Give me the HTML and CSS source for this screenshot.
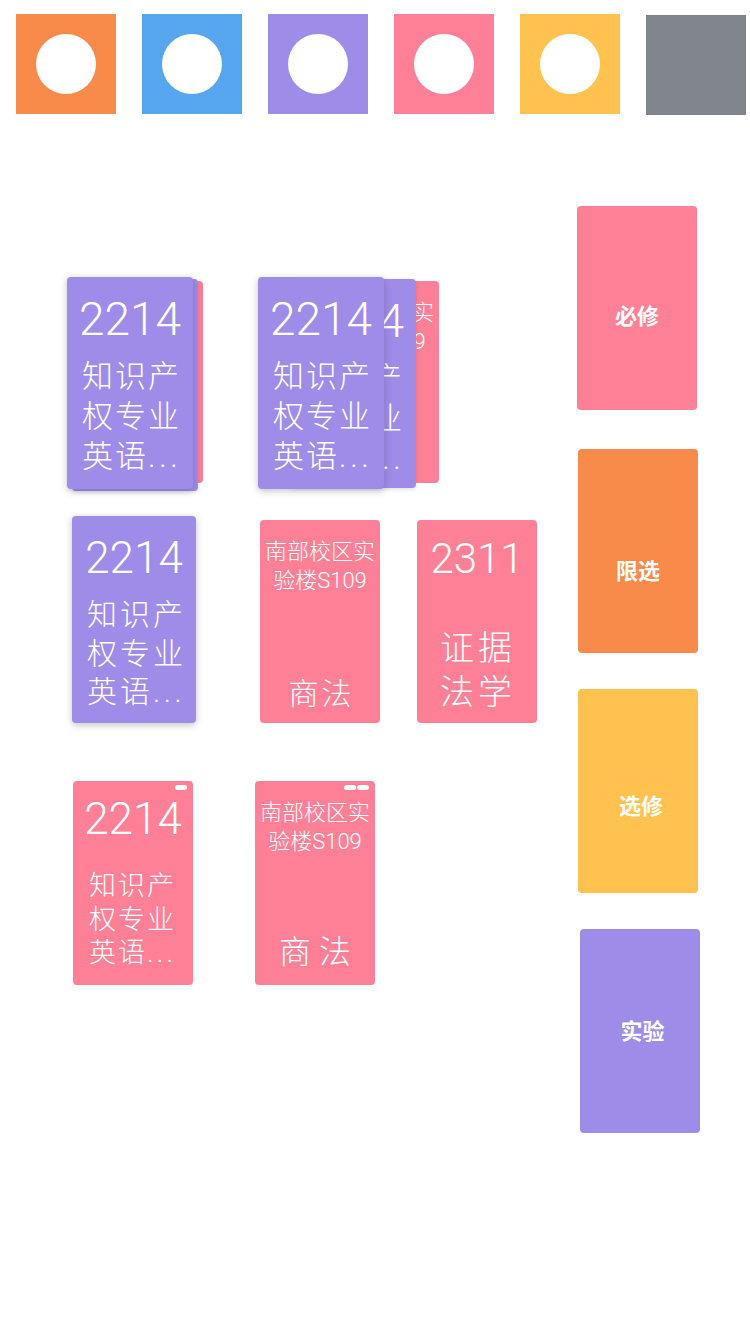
FILE: index.html
```html
<!DOCTYPE html>
<html lang="zh-CN">
<head>
<meta charset="utf-8">
<title>课程卡片</title>
<link rel="stylesheet" href="styles.css">
</head>
<body>
<div class="swatches">
  <div class="swatch swatch--orange"><span class="dot"></span></div>
  <div class="swatch swatch--blue"><span class="dot"></span></div>
  <div class="swatch swatch--purple"><span class="dot"></span></div>
  <div class="swatch swatch--pink"><span class="dot"></span></div>
  <div class="swatch swatch--yellow"><span class="dot"></span></div>
  <div class="swatch swatch--gray"></div>
</div>

<div class="board">
  <div class="board__left">
    <div class="row row--first">
      <div class="stack stack--tight">
        <div class="card card--pink stack__back"></div>
        <div class="card card--purple stack__mid course course--lg">
          <div class="course__code">2214</div>
          <div class="course__name">知识产权专业英语<span class="ellipsis">...</span></div>
        </div>
        <div class="card card--purple card--raised stack__front course course--lg">
          <div class="course__code">2214</div>
          <div class="course__name">知识产权专业英语<span class="ellipsis">...</span></div>
        </div>
      </div>
      <div class="stack stack--wide">
        <div class="card card--pink stack__back room">
          <div class="room__place">南部校区实验楼S109</div>
          <div class="room__title">商法</div>
        </div>
        <div class="card card--purple stack__mid course course--lg">
          <div class="course__code">2214</div>
          <div class="course__name">知识产权专业英语<span class="ellipsis">...</span></div>
        </div>
        <div class="card card--purple card--raised stack__front course course--lg">
          <div class="course__code">2214</div>
          <div class="course__name">知识产权专业英语<span class="ellipsis">...</span></div>
        </div>
      </div>
    </div>

    <div class="row row--second">
      <div class="card card--purple card--raised course course--md">
        <div class="course__code">2214</div>
        <div class="course__name">知识产权专业英语<span class="ellipsis">...</span></div>
      </div>
      <div class="card card--pink room room--md">
        <div class="room__place">南部校区实验楼S109</div>
        <div class="room__title">商法</div>
      </div>
      <div class="card card--pink course course--evidence">
        <div class="course__code">2311</div>
        <div class="course__name">证据法学</div>
      </div>
    </div>

    <div class="row row--third">
      <div class="card card--pink course course--sm">
        <div class="pills"><span class="pill"></span></div>
        <div class="course__code">2214</div>
        <div class="course__name">知识产权专业英语<span class="ellipsis">...</span></div>
      </div>
      <div class="card card--pink room room--lg">
        <div class="pills"><span class="pill"></span><span class="pill"></span></div>
        <div class="room__place">南部校区实验楼S109</div>
        <div class="room__title">商法</div>
      </div>
    </div>
  </div>

  <div class="board__right">
    <div class="tag tag--pink tag--required">必修</div>
    <div class="tag tag--orange tag--limited">限选</div>
    <div class="tag tag--yellow tag--elective">选修</div>
    <div class="tag tag--purple tag--lab">实验</div>
  </div>
</div>
</body>
</html>
```

FILE: styles.css
```css
* {
  box-sizing: border-box;
}

html, body {
  margin: 0;
  padding: 0;
  background: #ffffff;
}

body {
  width: 750px;
  min-height: 1334px;
  font-family: Roboto, "Noto Sans CJK SC", sans-serif;
  color: #ffffff;
}

/* ---------- top swatches ---------- */
.swatches {
  display: flex;
  align-items: flex-start;
  gap: 26px;
  padding: 14px 0 0 16px;
}

.swatch {
  width: 100px;
  height: 100px;
  display: flex;
  align-items: center;
  justify-content: center;
  flex: none;
}

.swatch--orange { background: #f98b4a; }
.swatch--blue { background: #56a6ee; }
.swatch--purple { background: #9f8be8; }
.swatch--pink { background: #fe8096; }
.swatch--yellow { background: #ffc24f; }
.swatch--gray {
  background: #80848b;
  margin-top: 1px;
}

.dot {
  width: 60px;
  height: 60px;
  border-radius: 50%;
  background: #ffffff;
}

/* ---------- board ---------- */
.board {
  display: flex;
  align-items: flex-start;
}

.board__left {
  width: 560px;
  flex: none;
}

.board__right {
  display: flex;
  flex-direction: column;
  align-items: flex-start;
  padding-top: 91px;
}

.row {
  display: flex;
  align-items: flex-start;
}

.row--first {
  margin-top: 162px;
  padding-left: 67px;
  gap: 65px;
}

.row--second {
  margin-top: 27px;
  padding-left: 72px;
}

.row--third {
  margin-top: 58px;
  padding-left: 73px;
  gap: 62px;
}

/* ---------- cards ---------- */
.card {
  border-radius: 4px;
  flex: none;
  overflow: hidden;
}

.card--pink { background: #fe8096; }
.card--purple { background: #9f8be8; }

.card--raised {
  box-shadow: 0 2px 7px rgba(60, 60, 80, 0.3);
}

/* stacks */
.stack {
  position: relative;
  width: 126px;
  height: 212px;
  flex: none;
}

.stack__back {
  position: absolute;
  top: 4px;
  width: 120px;
  height: 202px;
}

.stack__mid {
  position: absolute;
  top: 2px;
  width: 126px;
  height: 208px;
  box-shadow: 0 1px 4px rgba(60, 60, 80, 0.18);
}

.stack__front {
  position: relative;
}

.stack--tight .stack__back { left: 16px; }
.stack--tight .stack__mid { left: 5px; }

.stack--wide .stack__back { left: 61px; }
.stack--wide .stack__mid { left: 32px; height: 209px; }

/* course card */
.course {
  display: flex;
  flex-direction: column;
  align-items: center;
  font-weight: 300;
}

.course__code {
  text-align: center;
  font-weight: 300;
}

.course__name {
  align-self: flex-start;
  font-weight: 300;
  text-align: left;
}

.ellipsis {
  letter-spacing: 0.12em;
}

.course--lg {
  width: 126px;
  height: 212px;
  padding-top: 19px;
}
.course--lg .course__code {
  font-size: 46px;
  line-height: 46px;
}
.course--lg .course__name {
  margin-top: 15px;
  margin-left: 15px;
  width: 100px;
  font-size: 31px;
  line-height: 40px;
  letter-spacing: 2px;
}

.course--md {
  width: 124px;
  height: 207px;
  padding-top: 20px;
}
.course--md .course__code {
  font-size: 44px;
  line-height: 44px;
}
.course--md .course__name {
  margin-top: 16px;
  margin-left: 15px;
  width: 100px;
  font-size: 30px;
  line-height: 38.5px;
  letter-spacing: 3px;
}

.course--sm {
  position: relative;
  width: 120px;
  height: 204px;
  padding-top: 16px;
}
.course--sm .course__code {
  font-size: 44px;
  line-height: 44px;
}
.course--sm .course__name {
  margin-top: 29px;
  margin-left: 16px;
  width: 88px;
  font-size: 27px;
  line-height: 33.5px;
  letter-spacing: 2px;
}

.course--evidence {
  width: 120px;
  height: 203px;
  margin-top: 4px;
  margin-left: 37px;
  padding-top: 18px;
}
.course--evidence .course__code {
  font-size: 42px;
  line-height: 42px;
}
.course--evidence .course__name {
  margin-top: 47px;
  margin-left: 23px;
  width: 77px;
  font-size: 34px;
  line-height: 43.5px;
  letter-spacing: 4px;
}

/* room card */
.room {
  display: flex;
  flex-direction: column;
  align-items: center;
  text-align: center;
  padding-top: 17px;
  font-weight: 300;
}

.room__place {
  font-size: 22px;
  line-height: 29px;
  width: 112px;
}

.room__title {
  margin-top: auto;
  line-height: 40px;
}

.stack__back.room .room__title {
  font-size: 30px;
  padding-bottom: 9px;
}

.room--md {
  width: 120px;
  height: 203px;
  margin-top: 4px;
  margin-left: 64px;
  padding-bottom: 9px;
}
.room--md .room__title {
  font-size: 30px;
  letter-spacing: 3px;
  padding-left: 3px;
}

.room--lg {
  position: relative;
  width: 120px;
  height: 204px;
  padding-bottom: 13px;
}
.room--lg .room__title {
  font-size: 32px;
  letter-spacing: 8px;
  padding-left: 8px;
}

/* indicator pills (overlay badges) */
.pills {
  position: absolute;
  top: 4px;
  right: 6px;
  display: flex;
  gap: 1px;
}

.pill {
  width: 12px;
  height: 5px;
  border-radius: 3px;
  background: #ffffff;
}

/* ---------- category tags ---------- */
.tag {
  width: 120px;
  height: 204px;
  border-radius: 4px;
  display: flex;
  align-items: center;
  justify-content: center;
  font-family: "Noto Sans CJK SC", sans-serif;
  font-weight: 700;
  font-size: 22px;
  line-height: 30px;
  color: #ffffff;
  flex: none;
}

.tag--pink { background: #fe8096; }
.tag--orange { background: #f98b4a; }
.tag--yellow { background: #ffc24f; }
.tag--purple { background: #9f8be8; }

.tag--required {
  margin-left: 17px;
  padding-top: 12px;
}

.tag--limited {
  margin-top: 39px;
  margin-left: 18px;
  padding-top: 36px;
}

.tag--elective {
  margin-top: 36px;
  margin-left: 18px;
  padding-top: 25px;
  padding-left: 6px;
}

.tag--lab {
  margin-top: 36px;
  margin-left: 20px;
  padding-left: 5px;
  padding-bottom: 5px;
}
```
